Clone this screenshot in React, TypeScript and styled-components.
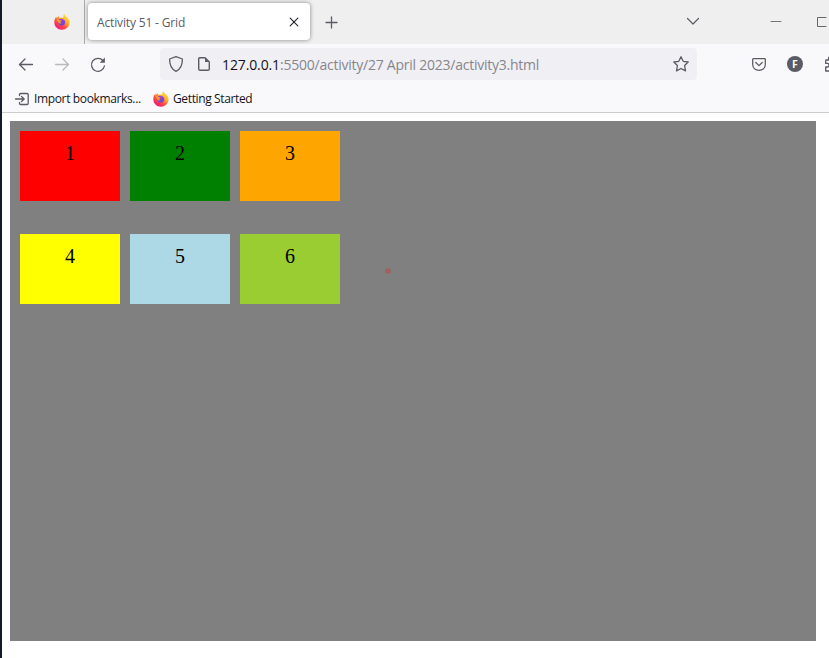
import React from 'react';
import styled, { createGlobalStyle } from 'styled-components';

const GlobalStyle = createGlobalStyle`
  * { box-sizing: border-box; }
  html, body { margin: 0; padding: 0; overflow: hidden; background: #fff; }
  svg { display: block; flex: none; overflow: visible; }
`;

const Window = styled.div`
  width: 829px;
  height: 658px;
  display: flex;
  flex-direction: column;
  overflow: hidden;
  background: #fff;
  border-left: 2px solid #101a29;
  font-family: 'Open Sans', 'Noto Sans', sans-serif;
`;

const TabStrip = styled.div`
  flex: none;
  height: 44px;
  display: flex;
  background: #efefef;
`;

const PinnedTab = styled.div`
  width: 83px;
  padding: 14px 0 0 52px;
  border-right: 1px solid #aaa;
`;

const ActiveTab = styled.div`
  width: 222px;
  height: 37px;
  margin: 3px 0 0 3px;
  padding: 1px 10px 0 9px;
  display: flex;
  align-items: center;
  justify-content: space-between;
  background: #fff;
  border-radius: 4px;
  box-shadow: 0 0 4px rgba(0, 0, 0, 0.45);
`;

const Label = styled.span<{ $size: number; $spacing: number; $color: string }>`
  padding-top: 1px;
  font-size: ${(p) => p.$size}px;
  line-height: 18px;
  letter-spacing: ${(p) => p.$spacing}px;
  color: ${(p) => p.$color};
  white-space: pre;
`;

const IconSlot = styled.div<{ $left: number; $top: number }>`
  flex: none;
  margin-left: ${(p) => p.$left}px;
  margin-top: ${(p) => p.$top}px;
`;

const NavBar = styled.div`
  flex: none;
  height: 40px;
  padding: 4px 0 4px 16px;
  display: flex;
  align-items: flex-start;
  background: #f9f9fb;
`;

const AddressBar = styled.div`
  flex: none;
  width: 537px;
  height: 32px;
  margin-left: 54px;
  padding: 0 8px;
  display: flex;
  align-items: center;
  gap: 12px;
  background: #f0eff4;
  border-radius: 4px;
`;

const Url = styled.div`
  flex: 1;
  margin-left: -2px;
  padding-top: 2px;
  font-size: 14px;
  line-height: 20px;
  letter-spacing: -0.24px;
  color: #87868c;
  white-space: pre;
`;

const Host = styled.span`
  letter-spacing: -0.12px;
  color: #15141a;
`;

const BookmarksBar = styled.div`
  flex: none;
  height: 29px;
  padding: 1px 0 0 12px;
  display: flex;
  align-items: center;
  background: #f9f9fb;
  border-bottom: 1px solid #ccc;
`;

const Bookmark = styled.div`
  width: 139px;
  display: flex;
  align-items: center;
  gap: 4px;
`;

const Page = styled.main`
  position: relative;
  width: 806px;
  height: 520px;
  margin: 8px 0 0 8px;
  padding: 10px;
  display: grid;
  grid-template-columns: repeat(3, 100px);
  grid-template-rows: 70px 70px;
  column-gap: 10px;
  row-gap: 33px;
  background: gray;
`;

const Tile = styled.div<{ $color: string }>`
  padding-top: 11px;
  background: ${(p) => p.$color};
  color: #000;
  font: 20px/23px 'Liberation Serif', serif;
  text-align: center;
`;

const Pointer = styled.div`
  position: absolute;
  left: 375px;
  top: 147px;
  width: 6px;
  height: 6px;
  border-radius: 50%;
  background: radial-gradient(#a85c5c 20%, #8f6c6c 80%);
`;

const Firefox = ({ id }: { id: string }) => (
  <svg width="16" height="16" viewBox="0 0 16 16">
    <defs>
      <linearGradient id={`${id}-body`} x1="0.85" y1="0.1" x2="0.2" y2="0.95">
        <stop offset="0" stopColor="#ffe645" />
        <stop offset="0.35" stopColor="#ffad28" />
        <stop offset="0.65" stopColor="#ff4b45" />
        <stop offset="1" stopColor="#f21178" />
      </linearGradient>
      <linearGradient id={`${id}-globe`} x1="0.8" y1="0" x2="0.2" y2="1">
        <stop offset="0" stopColor="#a342e5" />
        <stop offset="1" stopColor="#5447cf" />
      </linearGradient>
    </defs>
    <path
      d="M10.6 0C10.7 2 13 2.8 14.3 4.8C15.4 6.1 15.8 7.3 15.6 8.8C15.3 12.8 12 15.7 8 15.7C3.6 15.7.3 12.4.3 8.2C.3 5.8 1.2 4.1 2.3 2.7L2.7 4.2C3.4 3.6 4 2.5 4.8 2L5.2 4C6.4 3.1 8.2 3.3 9.4 3.9C8.8 2.5 9.5.8 10.6 0Z"
      fill={`url(#${id}-body)`}
    />
    <path d="M5.1 5.5C7 3.9 10.4 4.7 11.1 7.1C11.8 9.5 10.1 11.7 7.9 11.6C5.8 11.5 4.4 10 4.5 8.2Z" fill={`url(#${id}-globe)`} />
    <path d="M2.1 5.3C3.7 4.7 4.8 5 5.6 6L7.6 6.4C7.4 7.2 6.4 7.2 6.2 8C6.4 8.7 7.2 9 8 8.8C7.2 9.8 5.6 9.8 4.6 8.7Z" fill="#ff9a2b" />
  </svg>
);

type LineIconProps = { w: number; h: number; d: string; color?: string; stroke?: number };

const LineIcon = ({ w, h, d, color = '#5b5b66', stroke = 1.3 }: LineIconProps) => (
  <svg width={w} height={h} viewBox={`0 0 ${w} ${h}`} fill="none" stroke={color} strokeWidth={stroke} strokeLinecap="round" strokeLinejoin="round">
    <path d={d} />
  </svg>
);

const tiles = ['red', 'green', 'orange', 'yellow', 'lightblue', 'yellowgreen'];

export default function App() {
  return (
    <>
      <GlobalStyle />
      <Window>
        <TabStrip>
          <PinnedTab><Firefox id="pinned" /></PinnedTab>
          <ActiveTab>
            <Label $size={12} $spacing={-0.15} $color="#5b5b66">Activity 51 - Grid</Label>
            <LineIcon w={12} h={12} d="M2.2 2.2L9.8 9.8M9.8 2.2L2.2 9.8" color="#25242b" stroke={1.15} />
          </ActiveTab>
          <IconSlot $left={15} $top={16}><LineIcon w={13} h={13} d="M6.5 1V12M1 6.5H12" stroke={1.3} /></IconSlot>
          <IconSlot $left={348} $top={17}><LineIcon w={14} h={9} d="M1.5 1.5L7 7L12.5 1.5" stroke={1.2} /></IconSlot>
          <IconSlot $left={71} $top={21}><LineIcon w={10} h={1} d="M0 .5H10" color="#777" stroke={1} /></IconSlot>
          <IconSlot $left={36} $top={17}><LineIcon w={10} h={10} d="M9 .5H.5V9.5H9" color="#666" stroke={1} /></IconSlot>
        </TabStrip>
        <NavBar>
          <IconSlot $left={0} $top={9}><LineIcon w={16} h={14} d="M14.5 7.5H1.8M7 2L1.5 7.5L7 13" /></IconSlot>
          <IconSlot $left={20} $top={9}><LineIcon w={16} h={14} d="M1.5 7.5H14.2M9 2L14.5 7.5L9 13" color="#b9b9bd" /></IconSlot>
          <IconSlot $left={20} $top={9}>
            <svg width="16" height="16" viewBox="0 0 16 16" fill="none" stroke="#5b5b66" strokeWidth="1.3" strokeLinecap="round">
              <path d="M12.9 3.5A6.5 6.5 0 1 0 14.4 9" />
              <path d="M14.9 .6V5.8H9.7Z" fill="#5b5b66" stroke="none" />
            </svg>
          </IconSlot>
          <AddressBar>
            <LineIcon w={16} h={16} d="M8 .7L14.4 3C14.5 9 13 13 8 15.3C3 13 1.5 9 1.6 3Z" />
            <svg width="16" height="16" viewBox="0 0 16 16" fill="none" stroke="#5b5b66" strokeWidth="1.4" strokeLinejoin="round">
              <path d="M3.7 1.7H9.1L13.3 5.9V13Q13.3 14.3 12 14.3H4Q2.7 14.3 2.7 13V2.7Q2.7 1.7 3.7 1.7Z" />
              <path d="M9 1.5V6H13.5Z" fill="#5b5b66" stroke="none" />
            </svg>
            <Url><Host>127.0.0.1</Host>:5500/activity/27 April 2023/activity3.html</Url>
            <LineIcon w={16} h={16} d="M8 .8L10.2 5.3L15.2 6L11.6 9.5L12.5 14.9L8 12.5L3.5 14.9L4.4 9.5L.8 6L5.8 5.3Z" />
          </AddressBar>
          <IconSlot $left={55} $top={10}><LineIcon w={14} h={13} d="M1.5.7H12.5Q13.3.7 13.3 1.5V6.2C13.3 10 10.5 12.3 7 12.3S.7 10 .7 6.2V1.5Q.7.7 1.5.7ZM3.8 4.5L7 7.6L10.2 4.5" /></IconSlot>
          <IconSlot $left={21} $top={8}>
            <svg width="16" height="16" viewBox="0 0 16 16">
              <circle cx="8" cy="8" r="8" fill="#5b5b66" />
              <text x="8" y="12" textAnchor="middle" fill="#f9f9fb" fontFamily="Open Sans, sans-serif" fontWeight="700" fontSize="10.5">F</text>
            </svg>
          </IconSlot>
          <IconSlot $left={21} $top={8}><LineIcon w={16} h={16} d="M4.5 3.5V2.6A2 2 0 0 1 8.5 2.6V4H13V15H1.7V11H3A1.6 1.6 0 0 0 3.4 7.4H1.7V4.7Q1.7 4 2.4 4H4.5Z" /></IconSlot>
        </NavBar>
        <BookmarksBar>
          <Bookmark>
            <LineIcon w={16} h={14} d="M5.5 3.5V2.7Q5.5 1.5 6.7 1.5H13Q14.2 1.5 14.2 2.7V11.3Q14.2 12.5 13 12.5H6.7Q5.5 12.5 5.5 11.3V10.5M1.5 7H10M7.5 4.5L10.2 7L7.5 9.5" />
            <Label $size={12} $spacing={-0.36} $color="#15141a">Import bookmarks...</Label>
          </Bookmark>
          <Bookmark>
            <Firefox id="started" />
            <Label $size={12} $spacing={-0.37} $color="#15141a">Getting Started</Label>
          </Bookmark>
        </BookmarksBar>
        <Page>
          {tiles.map((color, i) => <Tile key={color} $color={color}>{i + 1}</Tile>)}
          <Pointer />
        </Page>
      </Window>
    </>
  );
}
